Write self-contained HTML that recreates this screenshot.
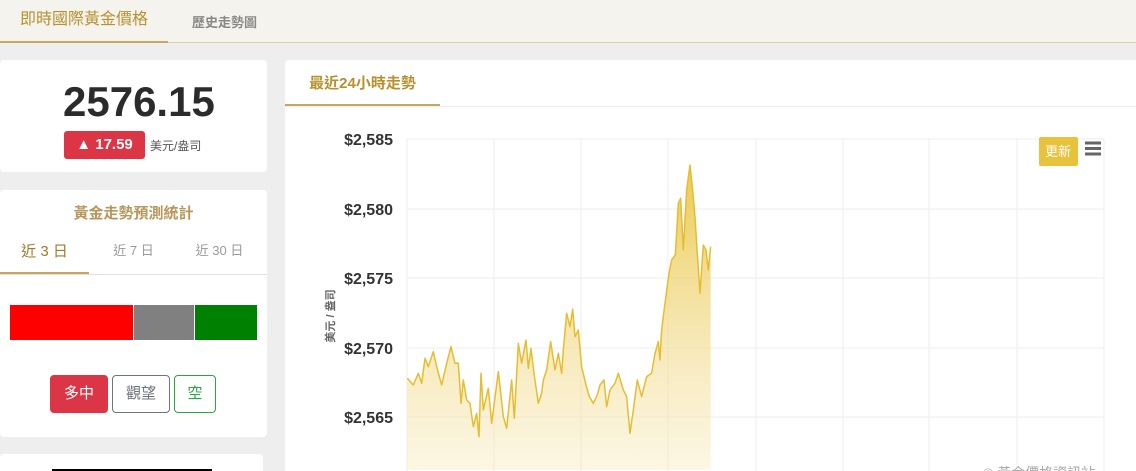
<!DOCTYPE html>
<html style="width:1136px;height:471px;overflow:hidden"><head><meta charset="utf-8"><style>
*{margin:0;padding:0;box-sizing:border-box}
body{width:1136px;height:471px;overflow:hidden;background:#eeeeee;font-family:"Liberation Sans","Noto Sans CJK TC",sans-serif;position:relative}
.top{position:absolute;left:0;top:0;width:1136px;height:43px;background:#f5f3ee;border-bottom:1px solid #e3cf9d}
.t1{position:absolute;left:0;top:0;width:168px;height:43px;border-bottom:2px solid #c8a560;color:#b8912f;font-size:16px;text-align:center;line-height:40px}
.t2{position:absolute;left:192px;top:12px;color:#888;font-size:13px;font-weight:bold}
.card{position:absolute;background:#fff;border-radius:4px}
.abs{position:absolute}
</style></head><body>
<div class="top"><div class="t1">即時國際黃金價格</div><div class="t2">歷史走勢圖</div></div>

<div class="card" style="left:0;top:60px;width:267px;height:112px">
<div class="abs" style="left:63px;top:18px;font-size:42px;color:#2b2b2b;font-weight:bold;letter-spacing:0px">2576.15</div>
<div class="abs" style="left:64px;top:71px;width:81px;height:28px;background:#dc3545;border-radius:3px;color:#fff;font-size:15px;font-weight:bold;line-height:28px;text-align:center">▲ 17.59</div>
<div class="abs" style="left:150px;top:77px;font-size:12px;color:#555">美元/盎司</div>
</div>

<div class="card" style="left:0;top:190px;width:267px;height:247px">
<div class="abs" style="left:0;top:12px;width:267px;text-align:center;font-size:15px;font-weight:bold;color:#b8955a">黃金走勢預測統計</div>
<div class="abs" style="left:0;top:50px;width:89px;text-align:center;font-size:15px;color:#a07a2a">近 3 日</div>
<div class="abs" style="left:89px;top:50px;width:89px;text-align:center;font-size:13px;color:#999">近 7 日</div>
<div class="abs" style="left:175px;top:50px;width:89px;text-align:center;font-size:13px;color:#999">近 30 日</div>
<div class="abs" style="left:0;top:84px;width:267px;height:1px;background:#e0e0e0"></div>
<div class="abs" style="left:0;top:82px;width:89px;height:2px;background:#c8a560"></div>
<div class="abs" style="left:10px;top:115px;width:123px;height:35px;background:#ff0000"></div>
<div class="abs" style="left:134px;top:115px;width:60px;height:35px;background:#808080"></div>
<div class="abs" style="left:195px;top:115px;width:62px;height:35px;background:#008000"></div>
<div class="abs" style="left:50px;top:185px;width:58px;height:38px;background:#dc3545;border-radius:4px;color:#fff;font-size:15px;text-align:center;line-height:38px">多中</div>
<div class="abs" style="left:112px;top:185px;width:58px;height:38px;border:1px solid #6c757d;border-radius:4px;color:#6c757d;font-size:15px;text-align:center;line-height:36px">觀望</div>
<div class="abs" style="left:174px;top:185px;width:42px;height:38px;border:1px solid #28a745;border-radius:4px;color:#28a745;font-size:15px;text-align:center;line-height:36px">空</div>
</div>

<div class="card" style="left:0;top:454px;width:263px;height:17px;border-radius:4px 4px 0 0"><div class="abs" style="left:52px;top:15px;width:160px;height:2px;background:#000"></div></div>

<div class="card" style="left:285px;top:60px;width:851px;height:411px;border-radius:4px 0 0 0">
<div class="abs" style="left:0;top:12px;width:155px;text-align:center;font-size:15px;font-weight:bold;color:#b8912f">最近24小時走勢</div>
<div class="abs" style="left:0;top:46px;width:851px;height:1px;background:#eee"></div>
<div class="abs" style="left:0;top:44px;width:155px;height:2px;background:#c8a560"></div>
</div>

<svg class="abs" style="left:0;top:0" width="1136" height="471">
<defs><linearGradient id="g" x1="0" y1="0" x2="0" y2="1"><stop offset="0" stop-color="#e9c440" stop-opacity="0.9"/><stop offset="1" stop-color="#f6e6b0" stop-opacity="0.35"/></linearGradient></defs>
<g stroke="#eeeeee" stroke-width="1">
<line x1="407" y1="139" x2="1104" y2="139"/><line x1="407" y1="209" x2="1104" y2="209"/><line x1="407" y1="278" x2="1104" y2="278"/><line x1="407" y1="348" x2="1104" y2="348"/><line x1="407" y1="417" x2="1104" y2="417"/>
<line x1="407" y1="139" x2="407" y2="471"/><line x1="494" y1="139" x2="494" y2="471"/><line x1="581" y1="139" x2="581" y2="471"/><line x1="668" y1="139" x2="668" y2="471"/><line x1="756" y1="139" x2="756" y2="471"/><line x1="843" y1="139" x2="843" y2="471"/><line x1="929" y1="139" x2="929" y2="471"/><line x1="1017" y1="139" x2="1017" y2="471"/><line x1="1104" y1="139" x2="1104" y2="471"/>
</g>
<g transform="translate(400,150) scale(0.3333)">
<polygon fill="url(#g)" points="22,960 22,685 40,705 55,670 65,700 75,625 85,650 100,605 110,650 125,705 140,640 153,590 165,640 175,640 183,760 190,690 200,750 210,760 220,830 230,790 237,860 243,670 250,780 265,715 275,820 295,665 310,800 320,835 335,690 343,805 355,580 365,640 378,570 385,655 393,595 402,670 415,760 425,730 430,690 440,660 452,575 465,660 475,610 485,670 490,600 500,490 510,530 518,478 525,560 535,540 545,650 558,705 568,740 580,760 592,735 600,705 612,690 620,770 630,720 645,700 655,670 670,720 680,740 690,850 700,780 712,690 725,740 740,680 755,670 765,610 775,575 780,630 785,540 795,460 807,370 815,330 826,315 835,160 842,145 850,300 860,120 870,45 878,120 885,200 890,280 900,430 910,285 918,300 925,360 932,290 932,960"/>
<polyline fill="none" stroke="#e6bd30" stroke-width="4.5" stroke-linejoin="round" points="22,685 40,705 55,670 65,700 75,625 85,650 100,605 110,650 125,705 140,640 153,590 165,640 175,640 183,760 190,690 200,750 210,760 220,830 230,790 237,860 243,670 250,780 265,715 275,820 295,665 310,800 320,835 335,690 343,805 355,580 365,640 378,570 385,655 393,595 402,670 415,760 425,730 430,690 440,660 452,575 465,660 475,610 485,670 490,600 500,490 510,530 518,478 525,560 535,540 545,650 558,705 568,740 580,760 592,735 600,705 612,690 620,770 630,720 645,700 655,670 670,720 680,740 690,850 700,780 712,690 725,740 740,680 755,670 765,610 775,575 780,630 785,540 795,460 807,370 815,330 826,315 835,160 842,145 850,300 860,120 870,45 878,120 885,200 890,280 900,430 910,285 918,300 925,360 932,290"/>
</g>
<g font-family="Liberation Sans, sans-serif" font-size="16" font-weight="bold" fill="#333" text-anchor="end">
<text x="393" y="145">$2,585</text><text x="393" y="215">$2,580</text><text x="393" y="284">$2,575</text><text x="393" y="354">$2,570</text><text x="393" y="423">$2,565</text>
</g>
<text transform="translate(334,316) rotate(-90)" text-anchor="middle" font-family="Liberation Sans, Noto Sans CJK TC, sans-serif" font-size="11" font-weight="bold" fill="#666">美元 / 盎司</text>
<rect x="1039" y="137" width="39" height="29" rx="2" fill="#e8c23a"/>
<text x="1058" y="156" text-anchor="middle" font-family="Liberation Sans, Noto Sans CJK TC, sans-serif" font-size="13" fill="#fff">更新</text>
<g stroke="#666" stroke-width="3"><line x1="1085" y1="143" x2="1101" y2="143"/><line x1="1085" y1="148.5" x2="1101" y2="148.5"/><line x1="1085" y1="154" x2="1101" y2="154"/></g>
<text x="983" y="478" font-family="Liberation Sans, Noto Sans CJK TC, sans-serif" font-size="14" fill="#aaa">© 黃金價格資訊站</text>
</svg>
</body></html>
